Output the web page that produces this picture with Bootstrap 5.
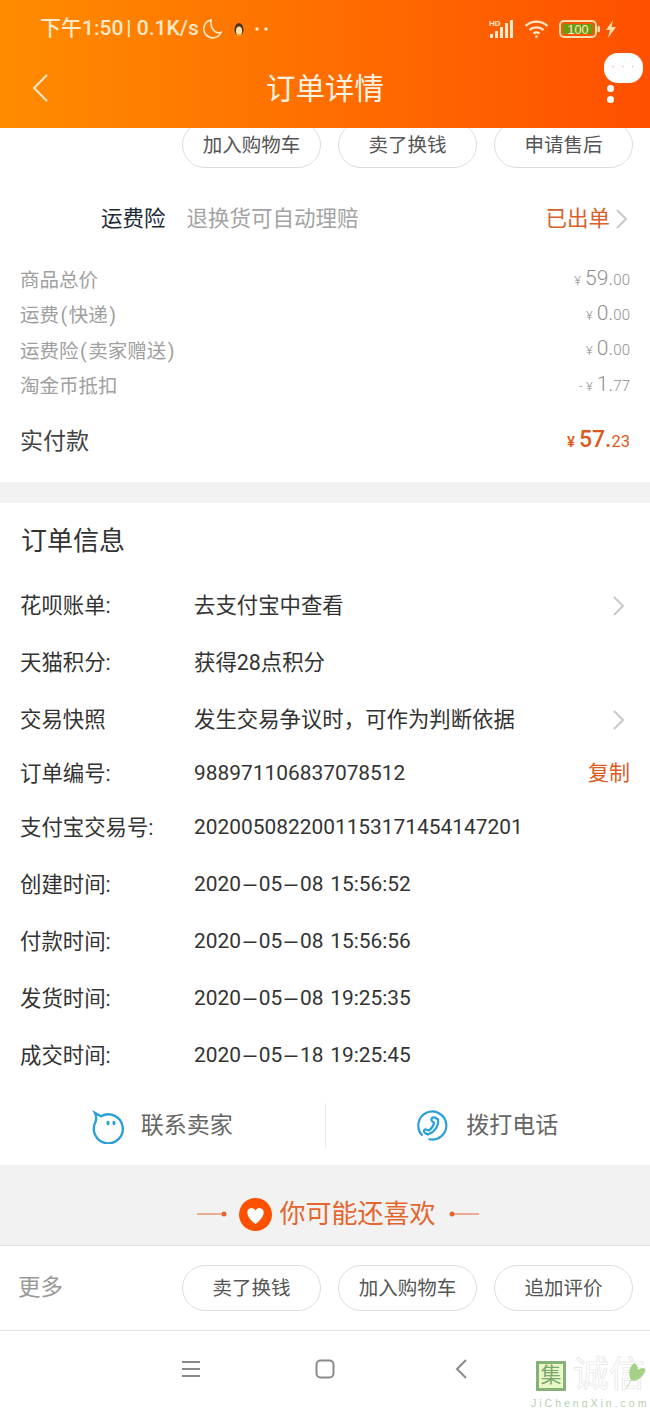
<!DOCTYPE html>
<html lang="zh-CN">
<head>
    <meta charset="UTF-8">
    <meta name="viewport" content="width=device-width, initial-scale=1.0">
    <title>订单详情</title>
    <link href="https://cdn.jsdelivr.net/npm/bootstrap@5.3.0/dist/css/bootstrap.min.css" rel="stylesheet">
    <style>
        body {
            margin: 0;
            width: 650px;
            height: 1408px;
            overflow: hidden;
            background: #fff;
            font-family: Roboto, "Noto Sans CJK SC", sans-serif;
            color: #333;
        }
        .app-head {
            height: 128px;
            background: linear-gradient(90deg, #ff8c00, #ff5000);
            color: #fff;
            position: relative;
            z-index: 2;
        }
        .status-row {
            height: 58px;
            padding: 0 33px 0 40px;
            font-size: 21px;
            font-weight: 500;
            color: #ffe9c8;
        }
        .speed { margin-left: 3px; margin-right: 2px; }
        .st-gap { margin-left: 10px; }
        .status-icons { gap: 9px; }
        .bolt-ico { margin-left: -5px; }
        .title-row { height: 60px; padding: 0 30px; position: relative; }
        .page-title { font-size: 29.5px; font-weight: 400; line-height: 62px; margin: 0; color: #fff3e2; }
        .back-ico { position: absolute; left: 32px; top: 15px; }
        .more-bubble {
            position: absolute;
            right: 7px;
            top: -5px;
            width: 39px;
            height: 30px;
            background: #fff;
            border-radius: 14px;
            color: #d98a60;
            font-size: 10px;
            line-height: 29px;
            text-align: center;
            letter-spacing: 7px;
            padding-left: 6px;
        }
        .more-dot { position: absolute; right: 36px; width: 7px; height: 7px; border-radius: 50%; background: #fff; }
        .sec-top { height: 354px; overflow: hidden; }
        .pill-row { padding-right: 17px; gap: 17px; }
        .pill {
            width: 139px;
            height: 46px;
            padding: 0;
            font-size: 19.5px;
            line-height: 46px;
            color: #555;
            border: 1px solid #ddd;
            background: #fff;
            border-radius: 23px;
        }
        .pill-up { margin-top: -6px; }
        .ins-row { height: 34px; margin-top: 34px; padding: 0 21px 0 101px; font-size: 21.5px; line-height: 34px; }
        .ins-name { color: #1c2b36; }
        .ins-tip { color: #a3a3a3; margin-left: 21px; }
        .ins-state { color: #d9602a; }
        .ins-arrow { margin-left: 5px; }
        .fee-list { margin-top: 27px; padding: 0 20px; }
        .fee-row { height: 35.3px; font-size: 19.5px; color: #a0a0a0; }
        .pn { margin: 0 1.5px; }
        .price { color: #8f8f8f; font-size: 21px; font-weight: 300; line-height: 24px; margin-top: -3px; }
        .price i { font-style: normal; font-size: 13px; margin-right: 4px; }
        .price small { font-size: 15px; }
        .pay-row { margin-top: 18px; padding: 0 20px; height: 40px; font-size: 23px; color: #444; }
        .pay-row .price { color: #dc5a20; font-size: 23px; font-weight: 500; }
        .pay-row .price i { font-size: 15px; }
        .pay-row .price small { font-size: 16.5px; font-weight: 400; }
        .band { height: 21px; background: #f2f2f2; }
        .sec-info { height: 662px; }
        .info-title { font-size: 26px; font-weight: 400; color: #333; margin: 0; padding: 19px 0 0 21px; line-height: 38px; height: 74px; }
        .info-row { height: 57px; padding: 0 20px; font-size: 21.4px; line-height: 57px; color: #333; }
        .info-row.tight { height: 51px; line-height: 51px; }
        .info-key { width: 174px; flex: none; }
        .info-val { flex: 1; white-space: nowrap; }
        .num-val { font-size: 20.9px; word-spacing: 1.5px; }
        .dash { display: inline-block; margin: 0 6px; transform: scaleX(2.6); }
        .info-row svg { margin-right: 4px; }
        .copy-link { color: #dc5a20; font-size: 21px; }
        .contact-row { height: 62px; margin-top: 11px; font-size: 23px; color: #666; }
        .contact-cell { flex: 1; height: 46px; gap: 17px; }
        .contact-cell + .contact-cell { border-left: 1px solid #ececec; }
        .rec-band {
            height: 81px;
            padding: 18px 0 0 26px;
            background: #f2f2f2;
            border-bottom: 1px solid #e2e2e2;
            color: #e4662e;
            font-size: 26px;
        }
        .rec-heart { margin-left: 12px; }
        .rec-text { margin: 0 13px 0 7px; }
        .bottom-bar { height: 85px; padding-left: 18px; border-bottom: 1px solid #e2e2e2; }
        .more-txt { font-size: 22.5px; color: #999; }
        .nav-keys { height: 78px; position: relative; }
        .nav-slot { position: absolute; top: 28px; }
        .water { position: absolute; right: 0; top: 1358px; width: 118px; height: 50px; z-index: 3; }
        .water-txt { position: absolute; left: -1px; top: 40px; font: 10.5px/10px "Liberation Sans", sans-serif; letter-spacing: 3px; color: #b5cfae; white-space: nowrap; }
        .water-box { position: absolute; left: 4px; top: 3px; width: 30px; height: 30px; background: #e9f8c6; border: 3px solid #86b27a; color: #7aa86e; font-size: 21px; line-height: 23px; text-align: center; }
        .water-ghost { position: absolute; left: 41px; top: 0; height: 34px; font-size: 36px; line-height: 34px; color: #fff; -webkit-text-stroke: .6px #e2e2e2; white-space: nowrap; }
        .water-leaf { position: absolute; left: 94px; top: 4px; }
    </style>
</head>
<body>
    <header class="app-head">
        <div class="status-row d-flex align-items-center">
            <span>下午1:50</span>
            <span class="speed">| 0.1K/s</span>
            <svg width="22" height="22" viewBox="0 0 22 22" fill="none" stroke="#ffe9c8" stroke-width="1.6"><path d="M10 2a9 9 0 1 0 10 12.500c-5 1.500-11-3-10-12.500z"/></svg>
            <svg class="st-gap" width="12" height="15" viewBox="0 0 12 15"><ellipse cx="6" cy="7.500" rx="4.500" ry="6.500" fill="#4a3418"/><ellipse cx="6" cy="9" rx="3" ry="4.500" fill="#ffe2a8"/><path d="M3 14h6l-1-2H4z" fill="#f2a21c"/></svg>
            <svg class="st-gap" width="14" height="4" viewBox="0 0 14 4" fill="#ffe9c8"><circle cx="2" cy="2" r="1.700"/><circle cx="11" cy="2" r="1.700"/></svg>
            <div class="status-icons ms-auto d-flex align-items-center">
                <svg width="26" height="20" viewBox="0 0 26 20" fill="#ffe9c8"><text x="0" y="7" font-size="8" font-weight="700" font-family="Liberation Sans, sans-serif">HD</text><rect x="1" y="15" width="3" height="4"/><rect x="6" y="12" width="3" height="7"/><rect x="11" y="8" width="3" height="11"/><rect x="16" y="4" width="3" height="15"/><rect x="21" y="1" width="3" height="18"/></svg>
                <svg width="26" height="20" viewBox="0 0 26 20" fill="none" stroke="#ffe9c8" stroke-width="2.400"><path d="M1.500 7a16 16 0 0 1 22 0"/><path d="M5.500 11a10.500 10.500 0 0 1 14 0"/><path d="M9.500 14.500a5 5 0 0 1 6 0"/><circle cx="12.500" cy="17.500" r="1.300" fill="#ffe9c8" stroke="none"/></svg>
                <svg width="42" height="20" viewBox="0 0 42 20"><rect x="1" y="2" width="36" height="16" rx="4" fill="none" stroke="#ffdcae" stroke-width="2"/><rect x="4" y="5" width="30" height="10" rx="1.500" fill="#6f9a10"/><rect x="38.500" y="7" width="2.500" height="6" rx="1" fill="#ffdcae"/><text x="19" y="14.500" text-anchor="middle" font-size="12.500" font-family="Liberation Sans, sans-serif" fill="#ffe9c8">100</text></svg>
                <svg class="bolt-ico" width="12" height="18" viewBox="0 0 12 18" fill="#ffdcae"><path d="M8 0 1 10h4l-2 8 8-11H6.500z"/></svg>
            </div>
        </div>
        <div class="title-row text-center">
            <svg class="back-ico" width="17" height="30" viewBox="0 0 17 30" fill="none" stroke="#ffe9c8" stroke-width="2"><path d="M15 2 2 15l13 13"/></svg>
            <h1 class="page-title">订单详情</h1>
            <div class="more-bubble">···</div>
            <span class="more-dot" style="top:27px"></span>
            <span class="more-dot" style="top:38px"></span>
        </div>
    </header>

    <section class="sec-top">
        <div class="pill-row d-flex justify-content-end pill-up">
            <button class="btn pill">加入购物车</button>
            <button class="btn pill">卖了换钱</button>
            <button class="btn pill">申请售后</button>
        </div>
        <div class="ins-row d-flex align-items-center">
            <span class="ins-name">运费险</span>
            <span class="ins-tip">退换货可自动理赔</span>
            <span class="ins-state ms-auto">已出单</span>
            <svg class="ins-arrow" width="14" height="22" viewBox="0 0 14 22" fill="none" stroke="#c8c8c8" stroke-width="2"><path d="M2 2l9 9-9 9"/></svg>
        </div>
        <div class="fee-list">
            <div class="fee-row d-flex justify-content-between align-items-center"><span>商品总价</span><span class="price"><i>¥</i>59.<small>00</small></span></div>
            <div class="fee-row d-flex justify-content-between align-items-center"><span>运费<span class="pn">(</span>快递<span class="pn">)</span></span><span class="price"><i>¥</i>0.<small>00</small></span></div>
            <div class="fee-row d-flex justify-content-between align-items-center"><span>运费险<span class="pn">(</span>卖家赠送<span class="pn">)</span></span><span class="price"><i>¥</i>0.<small>00</small></span></div>
            <div class="fee-row d-flex justify-content-between align-items-center"><span>淘金币抵扣</span><span class="price"><i>- ¥</i>1.<small>77</small></span></div>
        </div>
        <div class="pay-row d-flex justify-content-between align-items-center"><span>实付款</span><span class="price"><i>¥</i>57.<small>23</small></span></div>
    </section>

    <div class="band"></div>

    <section class="sec-info">
        <h2 class="info-title">订单信息</h2>
        <div class="info-row d-flex align-items-center"><span class="info-key">花呗账单:</span><span class="info-val">去支付宝中查看</span><svg width="14" height="22" viewBox="0 0 14 22" fill="none" stroke="#c8c8c8" stroke-width="2"><path d="M2 2l9 9-9 9"/></svg></div>
        <div class="info-row d-flex align-items-center"><span class="info-key">天猫积分:</span><span class="info-val">获得28点积分</span></div>
        <div class="info-row d-flex align-items-center"><span class="info-key">交易快照</span><span class="info-val">发生交易争议时，可作为判断依据</span><svg width="14" height="22" viewBox="0 0 14 22" fill="none" stroke="#c8c8c8" stroke-width="2"><path d="M2 2l9 9-9 9"/></svg></div>
        <div class="info-row tight d-flex align-items-center"><span class="info-key">订单编号:</span><span class="info-val num-val">988971106837078512</span><span class="copy-link">复制</span></div>
        <div class="info-row d-flex align-items-center"><span class="info-key">支付宝交易号:</span><span class="info-val num-val">2020050822001153171454147201</span></div>
        <div class="info-row d-flex align-items-center"><span class="info-key">创建时间:</span><span class="info-val num-val">2020<span class="dash">-</span>05<span class="dash">-</span>08 15:56:52</span></div>
        <div class="info-row d-flex align-items-center"><span class="info-key">付款时间:</span><span class="info-val num-val">2020<span class="dash">-</span>05<span class="dash">-</span>08 15:56:56</span></div>
        <div class="info-row d-flex align-items-center"><span class="info-key">发货时间:</span><span class="info-val num-val">2020<span class="dash">-</span>05<span class="dash">-</span>08 19:25:35</span></div>
        <div class="info-row d-flex align-items-center"><span class="info-key">成交时间:</span><span class="info-val num-val">2020<span class="dash">-</span>05<span class="dash">-</span>18 19:25:45</span></div>
        <div class="contact-row d-flex align-items-center">
            <div class="contact-cell d-flex align-items-center justify-content-center">
                <svg width="32" height="36" viewBox="0 0 32 36" fill="none" stroke="#2a9fd8" stroke-width="2.400"><path d="M9 8.300 3 5Q5 9 3.500 14A14.500 14.500 0 1 0 9 8.300z"/><ellipse cx="16" cy="15" rx="1.600" ry="2.200" fill="#2a9fd8" stroke="none"/><ellipse cx="22" cy="15" rx="1.600" ry="2.200" fill="#2a9fd8" stroke="none"/></svg>
                <span>联系卖家</span>
            </div>
            <div class="contact-cell d-flex align-items-center justify-content-center">
                <svg width="32" height="32" viewBox="0 0 32 32" fill="none" stroke="#2a9fd8" stroke-width="2.200"><path d="M5.500 25.500A14 14 0 1 1 11.500 29"/><path d="M18 7.500l3 2c1 7-4 13-10 15l-3-1.500c-2-1.500-1-4 1-3.500l3 1c2.500-2 4.500-4.500 5-7.500l-2-2c-1.500-2 0-4 3-3.500z"/></svg>
                <span>拨打电话</span>
            </div>
        </div>
    </section>

    <div class="rec-band d-flex align-items-center justify-content-center">
        <svg width="30" height="8" viewBox="0 0 30 8"><path d="M0 4h28" stroke="#e4662e" stroke-width="1"/><circle cx="27" cy="4" r="2.500" fill="#e4662e"/></svg>
        <svg class="rec-heart" width="33" height="33" viewBox="0 0 33 33"><circle cx="16.500" cy="16.500" r="16.500" fill="#ff5000"/><path d="M16.500 26C7 19 7 12.500 10.500 10.500c2.500-1.500 5 0 6 2 1-2 3.500-3.500 6-2 3.500 2 3.500 8.500-6 15.500z" fill="#fff"/></svg>
        <span class="rec-text">你可能还喜欢</span>
        <svg width="30" height="8" viewBox="0 0 30 8"><path d="M3 4h27" stroke="#e4662e" stroke-width="1"/><circle cx="3" cy="4" r="2.500" fill="#e4662e"/></svg>
    </div>

    <div class="bottom-bar d-flex align-items-center">
        <span class="more-txt">更多</span>
        <div class="pill-row d-flex ms-auto">
            <button class="btn pill">卖了换钱</button>
            <button class="btn pill">加入购物车</button>
            <button class="btn pill">追加评价</button>
        </div>
    </div>

    <nav class="nav-keys">
        <svg class="nav-slot" style="left:181px" width="20" height="20" viewBox="0 0 20 20" stroke="#8a8a8a" stroke-width="2"><path d="M1 3h18M1 10h18M1 17h18"/></svg>
        <svg class="nav-slot" style="left:315px" width="20" height="20" viewBox="0 0 20 20" fill="none" stroke="#8a8a8a" stroke-width="2"><rect x="1.500" y="1.500" width="17" height="17" rx="4"/></svg>
        <svg class="nav-slot" style="left:455px" width="14" height="20" viewBox="0 0 14 20" fill="none" stroke="#8a8a8a" stroke-width="2"><path d="M11 1 2 10l9 9"/></svg>
    </nav>

    <div class="water">
        <div class="water-box">集</div>
        <div class="water-ghost">诚信</div>
        <svg class="water-leaf" width="22" height="32" viewBox="0 0 22 32"><path d="M8 1c-5 4-6 11-3 17 3 2 8 0 12-5 3-4 3-7 0-7-2 0-4 1-5 2 0-3-1-6-4-7z" fill="#a6d184"/><path d="M5 18C3 23 0 26-2 29" stroke="#b9dca0" fill="none"/></svg>
        <div class="water-txt">JiChengXin.com</div>
    </div>
</body>
</html>
